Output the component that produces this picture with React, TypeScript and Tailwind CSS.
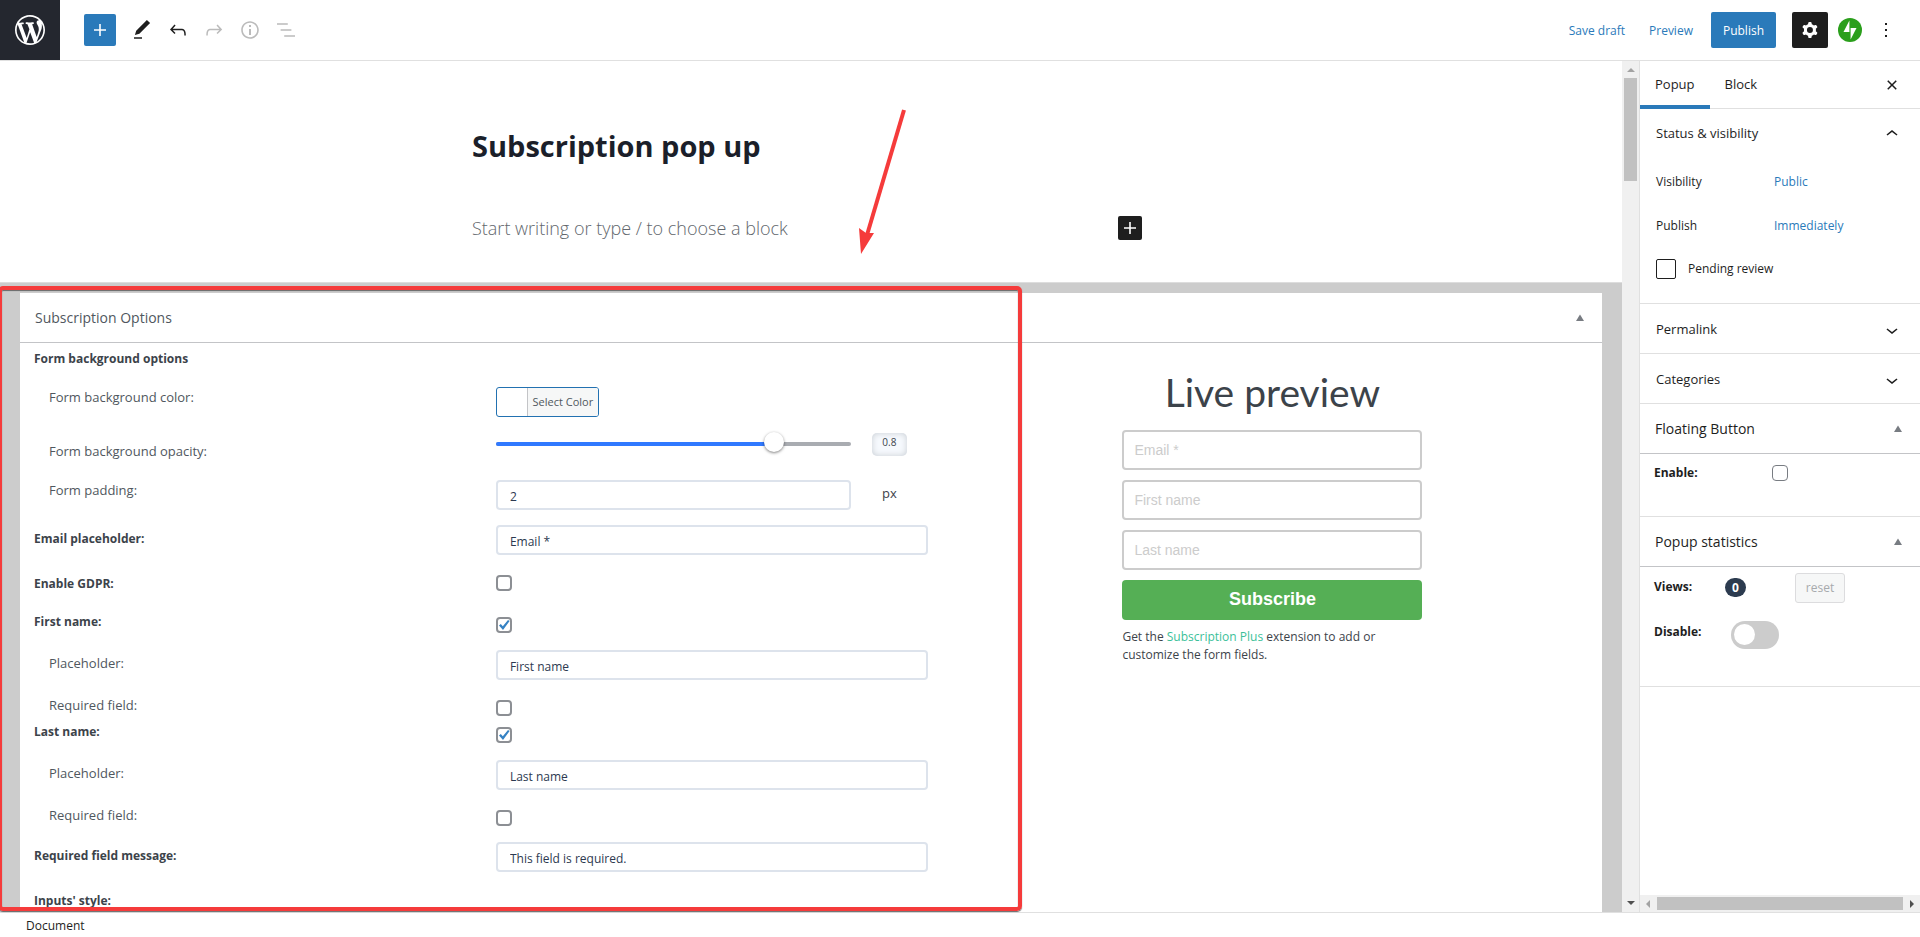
import React, { useState } from 'react';
import clsx from 'clsx';

const icons = {
  plus: 'M18 11.2h-5.2V6h-1.6v5.2H6v1.6h5.2V18h1.6v-5.2H18z',
  edit: 'M20.1 5.1L16.9 2 6.2 12.7l-1.3 4.4 4.5-1.3L20.1 5.1zM4 20.8h8v-1.5H4v1.5z',
  undo: 'M18.3 11.7c-.6-.6-1.4-.9-2.3-.9H6.7l2.9-3.3-1.1-1-4.5 5L8.5 16l1-1-2.7-2.7H16c.5 0 .9.2 1.3.5 1 1 1 3.4 1 4.5v.3h1.5v-.2c0-1.5 0-4.3-1.5-5.7z',
  redo: 'M15.6 6.5l-1.1 1 2.9 3.3H8c-.9 0-1.7.3-2.3.9-1.4 1.5-1.4 4.2-1.4 5.6v.2h1.5v-.3c0-1.1 0-3.5 1-4.5.3-.3.7-.5 1.3-.5h9.2L14.5 15l1.1 1.1 4.6-4.6-4.6-5z',
  info: 'M12 3.2c-4.8 0-8.8 3.9-8.8 8.8 0 4.8 3.9 8.8 8.8 8.8 4.8 0 8.8-3.9 8.8-8.8 0-4.8-4-8.8-8.8-8.8zm0 16c-4 0-7.2-3.3-7.2-7.2C4.8 8 8 4.8 12 4.8s7.2 3.3 7.2 7.2c0 4-3.2 7.2-7.2 7.2zM11 17h2v-6h-2v6zm0-8h2V7h-2v2z',
  list: 'M13.8 5.2H3v1.5h10.8V5.2zm-3.6 12v1.5H21v-1.5H10.2zm7.2-6H6.6v1.5h10.8v-1.5z',
  more: 'M13 19h-2v-2h2v2zm0-6h-2v-2h2v2zm0-6h-2V5h2v2z',
  close: 'M12 13.06l3.712 3.713 1.061-1.06L13.061 12l3.712-3.712-1.06-1.06L12 10.938 8.288 7.227l-1.061 1.06L10.939 12l-3.712 3.712 1.06 1.061L12 13.061z',
  up: 'M6.5 12.4L12 8l5.5 4.4-.9 1.2L12 10l-4.5 3.6-1-1.2z',
  down: 'M17.5 11.6L12 16l-5.5-4.4.9-1.2L12 14l4.5-3.6 1 1.2z',
  cog: 'M10.289 4.836A1 1 0 0111.275 4h1.306a1 1 0 01.987.836l.244 1.466c.787.26 1.503.679 2.108 1.218l1.393-.522a1 1 0 011.216.437l.653 1.13a1 1 0 01-.23 1.273l-1.148.944a6.025 6.025 0 010 2.435l1.149.946a1 1 0 01.23 1.272l-.653 1.13a1 1 0 01-1.216.437l-1.394-.522c-.605.54-1.32.958-2.108 1.218l-.244 1.466a1 1 0 01-.987.836h-1.306a1 1 0 01-.986-.836l-.244-1.466a5.995 5.995 0 01-2.108-1.218l-1.394.522a1 1 0 01-1.217-.436l-.653-1.131a1 1 0 01.23-1.272l1.149-.946a6.026 6.026 0 010-2.435l-1.148-.944a1 1 0 01-.23-1.272l.653-1.131a1 1 0 011.217-.437l1.393.522a5.994 5.994 0 012.108-1.218l.244-1.466zM14.929 12a3 3 0 11-6 0 3 3 0 016 0z',
};

function Icon({ name }: { name: keyof typeof icons }) {
  return (
    <svg viewBox="0 0 24 24" className="size-6 shrink-0 fill-current" aria-hidden="true">
      <path fillRule="evenodd" clipRule="evenodd" d={icons[name]} />
    </svg>
  );
}

function Triangle() {
  return (
    <svg viewBox="0 0 8 7" className="h-[7px] w-2 fill-[#787c82]" aria-hidden="true">
      <path d="M4 0.5L8 7H0z" />
    </svg>
  );
}

interface CheckboxProps {
  id: string;
  defaultChecked?: boolean;
  className?: string;
}

function Checkbox({ id, defaultChecked, className }: CheckboxProps) {
  return (
    <span className={clsx('grid size-4 shrink-0', className)}>
      <input
        id={id}
        type="checkbox"
        defaultChecked={defaultChecked}
        className="peer col-start-1 row-start-1 size-4 appearance-none rounded-[4px] border-2 border-[#8c8f94] bg-white"
      />
      <svg
        viewBox="0 0 16 16"
        className="pointer-events-none invisible col-start-1 row-start-1 size-4 fill-[#3582c4] peer-checked:visible"
        aria-hidden="true"
      >
        <path d="M3 8.4l1.8-1.4 2 2.2L12 3l1.6 1L7 13z" />
      </svg>
    </span>
  );
}

interface RowProps {
  label: string;
  htmlFor?: string;
  sub?: boolean;
  className?: string;
  labelClass?: string;
  children?: React.ReactNode;
}

function Row({ label, htmlFor, sub, className = 'mb-[15px]', labelClass, children }: RowProps) {
  return (
    <div className={clsx('grid grid-cols-2 items-start gap-x-[30px]', className)}>
      <label
        htmlFor={htmlFor}
        className={clsx(
          sub ? 'pl-[15px] text-[13px] leading-5 text-[#50575e]' : 'text-xs leading-[22px] font-bold',
          labelClass,
        )}
      >
        {label}
      </label>
      {children}
    </div>
  );
}

const inputClass =
  'h-[30px] w-full min-w-0 rounded-[4px] border-2 border-[#dde3ec] bg-white px-3 pt-0.5 text-xs text-[#2c3950]';

function TextRow({ id, label, value, sub }: { id: string; label: string; value: string; sub?: boolean }) {
  return (
    <Row label={label} htmlFor={id} sub={sub} labelClass="pt-[3px]">
      <input id={id} type="text" defaultValue={value} className={inputClass} />
    </Row>
  );
}

function SubscriptionForm() {
  const [opacity, setOpacity] = useState(0.8);
  const percent = 5 + opacity * 92;

  return (
    <div className="w-7/12 pt-[5px] pr-[15px] pl-3.5">
      <Row label="Form background options" className="mb-[15px] h-6" />
      <Row label="Form background color:" htmlFor="bg-color" sub>
        <button
          id="bg-color"
          type="button"
          className="flex h-[30px] w-[103px] overflow-hidden rounded-[3px] border border-[#2271b1] bg-white text-[11px]"
        >
          <span className="w-[30px]" />
          <span className="h-full flex-1 border-l border-[#c3c4c7] bg-[#f6f7f7] text-center leading-7 whitespace-nowrap text-[#50575e]">
            Select Color
          </span>
        </button>
      </Row>
      <Row label="Form background opacity:" htmlFor="bg-opacity" sub className="mb-[15px] h-[33px]" labelClass="pt-[9px]">
        <div className="flex items-center gap-[21px] pr-[21px]">
          <div className="grid h-6 flex-1 items-center">
            <div className="col-start-1 row-start-1 h-1 overflow-hidden rounded-full bg-[#a9acb1]">
              <div className="h-full bg-[#3079ff]" style={{ width: `${percent}%` }} />
            </div>
            <input
              id="bg-opacity"
              type="range"
              min={0}
              max={1}
              step={0.1}
              value={opacity}
              onChange={(e) => setOpacity(Number(e.target.value))}
              className="col-start-1 row-start-1 h-5 w-full -translate-y-0.5 appearance-none bg-transparent [&::-webkit-slider-thumb]:size-5 [&::-webkit-slider-thumb]:appearance-none [&::-webkit-slider-thumb]:rounded-full [&::-webkit-slider-thumb]:bg-white [&::-webkit-slider-thumb]:shadow-[0_1px_3px_rgba(0,0,0,0.5)]"
            />
          </div>
          <output className="h-[23px] w-[35px] rounded-[5px] bg-[#f6f9fd] text-center text-[10px] leading-[18px] shadow-[inset_0_0_6px_#c8cdd3]">
            {opacity}
          </output>
        </div>
      </Row>
      <Row label="Form padding:" htmlFor="padding" sub>
        <div className="flex gap-[21px] pr-[21px]">
          <input id="padding" type="text" defaultValue="2" className={inputClass} />
          <span className="w-[35px] shrink-0 text-center text-[13px] leading-[26px]">px</span>
        </div>
      </Row>
      <TextRow id="email-placeholder" label="Email placeholder:" value="Email *" />
      <Row label="Enable GDPR:" htmlFor="gdpr" className="mb-[15px] h-[26px]" labelClass="pt-[3px]">
        <Checkbox id="gdpr" className="mt-[5px]" />
      </Row>
      <Row label="First name:" htmlFor="first-name" className="mb-[15px] h-6">
        <Checkbox id="first-name" defaultChecked className="mt-1.5" />
      </Row>
      <TextRow id="first-placeholder" label="Placeholder:" value="First name" sub />
      <Row label="Required field:" htmlFor="first-required" sub className="h-[26px]">
        <Checkbox id="first-required" className="mt-[5px]" />
      </Row>
      <Row label="Last name:" htmlFor="last-name" className="mb-[15px] h-6">
        <Checkbox id="last-name" defaultChecked className="mt-1.5" />
      </Row>
      <TextRow id="last-placeholder" label="Placeholder:" value="Last name" sub />
      <Row label="Required field:" htmlFor="last-required" sub className="mb-[15px] h-[22px]">
        <Checkbox id="last-required" className="mt-[5px]" />
      </Row>
      <TextRow id="required-message" label="Required field message:" value="This field is required." />
      <Row label="Inputs' style:" labelClass="pt-[3px]" />
    </div>
  );
}

function LivePreview() {
  return (
    <div className="w-5/12 pt-[25px]">
      <div className="mx-auto w-[300px]">
        <h2 className="mb-3.5 text-center font-[Lato] text-[39px] leading-12">Live preview</h2>
        <form className="flex flex-col gap-2.5 font-['Liberation_Sans',sans-serif]">
          {['Email *', 'First name', 'Last name'].map((text) => (
            <input
              key={text}
              type="text"
              placeholder={text}
              aria-label={text}
              className="h-10 rounded-[4px] border-2 border-[#cccccc] px-2.5 text-sm placeholder:text-[#cccccc]"
            />
          ))}
          <button type="button" className="h-10 rounded-[4px] bg-[#55af55] pb-0.5 text-lg font-bold text-white">
            Subscribe
          </button>
        </form>
        <p className="mt-2 text-xs leading-[18px]">
          Get the{' '}
          <a href="#subscription-plus" className="text-[#3bbf99]">
            Subscription Plus
          </a>{' '}
          extension to add or customize the form fields.
        </p>
      </div>
    </div>
  );
}

function Header() {
  return (
    <header className="flex h-[61px] shrink-0 items-center border-b border-[#e0e0e0] text-[#1e1e1e]">
      <a href="#dashboard" aria-label="View posts" className="flex size-[60px] items-center justify-center bg-[#24272f] text-white">
        <svg viewBox="-2 -2 24 24" className="size-9 fill-current" aria-hidden="true">
          <path d="M20 10c0-5.51-4.49-10-10-10C4.48 0 0 4.49 0 10c0 5.52 4.48 10 10 10 5.51 0 10-4.48 10-10zM7.78 15.37L4.37 6.22c.55-.02 1.17-.08 1.17-.08.5-.06.44-1.13-.06-1.11 0 0-1.45.11-2.37.11-.18 0-.37 0-.58-.01C4.12 2.69 6.87 1.11 10 1.11c2.33 0 4.45.87 6.05 2.34-.68-.11-1.65.39-1.65 1.58 0 .74.45 1.36.9 2.1.35.61.55 1.36.55 2.46 0 1.49-1.4 5-1.4 5l-3.03-8.37c.54-.02.82-.17.82-.17.5-.05.44-1.25-.06-1.22 0 0-1.44.12-2.38.12-.87 0-2.33-.12-2.33-.12-.5-.03-.56 1.2-.06 1.22l.92.08 1.26 3.41zM17.41 10c.24-.64.74-1.87.43-4.25.7 1.29 1.05 2.71 1.05 4.25 0 3.29-1.73 6.24-4.4 7.78.97-2.59 1.94-5.2 2.92-7.78zM6.1 18.09C3.12 16.65 1.11 13.53 1.11 10c0-1.3.23-2.48.72-3.59C3.25 10.3 4.67 14.2 6.1 18.09zm4.03-6.63l2.58 6.98c-.86.29-1.76.45-2.71.45-.79 0-1.57-.11-2.29-.33.81-2.38 1.62-4.74 2.42-7.1z" />
        </svg>
      </a>
      <div className="ml-6 flex items-center gap-3">
        <button type="button" aria-label="Add block" className="mr-0.5 flex size-8 items-center justify-center rounded-xs bg-[#2a7aba] text-white">
          <Icon name="plus" />
        </button>
        <button type="button" aria-label="Tools"><Icon name="edit" /></button>
        <button type="button" aria-label="Undo"><Icon name="undo" /></button>
        <button type="button" aria-label="Redo" disabled className="text-[#bbbbbb]"><Icon name="redo" /></button>
        <button type="button" aria-label="Details" disabled className="text-[#bbbbbb]"><Icon name="info" /></button>
        <button type="button" aria-label="List view" disabled className="text-[#bbbbbb]"><Icon name="list" /></button>
      </div>
      <div className="ml-auto flex items-center pr-[22px] text-xs text-[#2a7aba]">
        <button type="button" className="mr-6 pt-0.5">Save draft</button>
        <button type="button" className="mr-[18px] pt-0.5">Preview</button>
        <button type="button" className="mr-4 h-9 rounded-xs bg-[#2a7aba] px-3 pt-0.5 text-white">Publish</button>
        <button type="button" aria-label="Settings" className="mr-2.5 flex size-9 items-center justify-center rounded-xs bg-[#1e1e1e] text-white">
          <Icon name="cog" />
        </button>
        <button type="button" aria-label="Jetpack" className="mr-3">
          <svg viewBox="0 0 24 24" className="size-6" aria-hidden="true">
            <circle cx="12" cy="12" r="12" fill="#2b9f1c" />
            <path fill="#fff" d="M11.4 2.4V14H5.5zM12.6 21.6V10h5.9z" />
          </svg>
        </button>
        <button type="button" aria-label="Options" className="text-[#1e1e1e]"><Icon name="more" /></button>
      </div>
    </header>
  );
}

const metaboxTitle =
  'flex h-[50px] w-full items-center justify-between border-b border-[#c3c4c7] pr-[18px] pl-[15px] text-sm';

function Sidebar() {
  return (
    <aside className="flex w-[281px] shrink-0 flex-col border-l border-[#e0e0e0] text-xs text-[#1e1e1e]">
      <div className="flex h-12 shrink-0 items-center border-b border-[#e0e0e0] pr-4 text-[13px]">
        <button type="button" className="h-12 self-start border-b-4 border-[#2a7aba] px-[15px] pt-1">Popup</button>
        <button type="button" className="h-12 px-[15px]">Block</button>
        <button type="button" aria-label="Close settings" className="ml-auto"><Icon name="close" /></button>
      </div>

      <div className="min-h-0 flex-1 overflow-hidden">
        <section className="h-[195px] border-b border-[#e0e0e0] px-4">
          <button type="button" className="flex h-[50px] w-full items-center justify-between text-[13px]">
            Status &amp; visibility <Icon name="up" />
          </button>
          <dl className="grid grid-cols-[118px_1fr] pt-px leading-11">
            <dt>Visibility</dt>
            <dd><button type="button" className="text-[#2a7aba]">Public</button></dd>
            <dt>Publish</dt>
            <dd><button type="button" className="text-[#2a7aba]">Immediately</button></dd>
          </dl>
          <label className="mt-[11px] flex items-center gap-3">
            <input type="checkbox" className="size-5 appearance-none rounded-xs border border-[#1e1e1e]" />
            Pending review
          </label>
        </section>
        {['Permalink', 'Categories'].map((title) => (
          <button key={title} type="button" className="flex h-[50px] w-full items-center justify-between border-b border-[#e0e0e0] pt-0.5 pr-4 pl-4 text-[13px]">
            {title} <Icon name="down" />
          </button>
        ))}

        <section className="h-[113px] border-b border-[#e0e0e0]">
          <button type="button" className={metaboxTitle}>
            Floating Button <Triangle />
          </button>
          <div className="grid grid-cols-[118px_1fr] items-center px-3.5 pt-[9px]">
            <label htmlFor="floating" className="font-bold leading-5">Enable:</label>
            <input id="floating" type="checkbox" className="size-4 appearance-none rounded-[4px] border border-[#787c82]" />
          </div>
        </section>

        <section className="h-[170px] border-b border-[#e0e0e0]">
          <button type="button" className={metaboxTitle}>
            Popup statistics <Triangle />
          </button>
          <div className="flex items-start px-3.5 pt-1.5">
            <span className="mt-1 w-[71px] font-bold leading-5">Views:</span>
            <span className="mt-[5px] h-[19px] w-[21px] rounded-full bg-[#2c3b4f] text-center font-bold leading-[19px] text-white">0</span>
            <button type="button" disabled className="ml-[49px] h-[30px] w-[50px] rounded-[3px] border border-[#dcdcde] bg-[#f6f7f7] text-[#a7aaad]">
              reset
            </button>
          </div>
          <label className="mt-[18px] flex items-start px-3.5">
            <span className="w-[77px] font-bold leading-[22px]">Disable:</span>
            <input
              type="checkbox"
              className="h-7 w-12 appearance-none rounded-full bg-[#cccccc] p-[3px] before:block before:size-[21px] before:rounded-full before:bg-white checked:before:translate-x-5"
            />
          </label>
        </section>
      </div>

      <div className="flex h-[17px] shrink-0 items-center justify-between bg-[#f0f0f0] px-1.5" aria-hidden="true">
        <svg viewBox="0 0 4 8" className="h-2 w-1 fill-[#a3a3a3]"><path d="M4 0v8L0 4z" /></svg>
        <div className="mx-[7px] h-[13px] flex-1 bg-[#c1c1c1]" />
        <svg viewBox="0 0 4 8" className="h-2 w-1 fill-[#505050]"><path d="M0 0v8l4-4z" /></svg>
      </div>
    </aside>
  );
}

export default function App() {
  return (
    <div className="flex h-screen flex-col overflow-hidden bg-white font-['Open_Sans','Noto_Sans',sans-serif] text-[#3c434a]">
      <Header />

      <div className="relative flex min-h-0 flex-1">
        <main className="flex min-w-0 flex-1 flex-col overflow-hidden">
          <div className="h-[221px] shrink-0">
            <div className="mx-auto max-w-[680px] pt-[61px] pr-[9px] pl-px">
              <h1 className="mb-[46px] text-[29px] font-bold leading-12 text-[#1b1f2a]">Subscription pop up</h1>
              <div className="flex items-center justify-between">
                <p className="text-lg font-light leading-6 text-[#62676d]">
                  Start writing or type / to choose a block
                </p>
                <button type="button" aria-label="Add block" className="rounded-xs bg-[#1e1e1e] text-white">
                  <Icon name="plus" />
                </button>
              </div>
            </div>
          </div>

          <div className="min-h-0 flex-1 border-t border-[#dddddd] bg-[#cccccc] px-5 pt-2.5">
            <section className="h-full bg-white">
              <div className="flex h-[50px] items-center justify-between border-b border-[#c3c4c7] pr-[18px] pl-[15px]">
                <h2 className="text-sm text-[#50575e]">Subscription Options</h2>
                <button type="button" aria-label="Toggle panel"><Triangle /></button>
              </div>
              <div className="flex">
                <SubscriptionForm />
                <LivePreview />
              </div>
            </section>
          </div>
        </main>

        <div className="flex w-[17px] shrink-0 flex-col items-center bg-[#f0f0f0] py-[7px]" aria-hidden="true">
          <svg viewBox="0 0 8 4" className="h-1 w-2 fill-[#a3a3a3]"><path d="M0 4h8L4 0z" /></svg>
          <div className="mt-1.5 h-[103px] w-[13px] bg-[#c1c1c1]" />
          <svg viewBox="0 0 8 4" className="mt-auto h-1 w-2 fill-[#505050]"><path d="M0 0h8L4 4z" /></svg>
        </div>

        <Sidebar />

        {/* Annotation: highlighted options box and arrow */}
        <div className="pointer-events-none absolute top-[225px] bottom-px -left-0.5 w-[1024px] rounded-[5px] border-4 border-[#f53b3b] shadow-[0_1px_1px_#666,inset_0_1px_1px_#666]" />
        <svg viewBox="0 0 50 150" className="pointer-events-none absolute top-12 left-[857px] h-[150px] w-[50px]" aria-hidden="true">
          <path d="M47 1L10 126" stroke="#f53b3b" strokeWidth="4" />
          <path d="M4 145L2 119L9 124L17 124z" fill="#f53b3b" />
        </svg>
      </div>

      <footer className="flex h-[25px] shrink-0 items-center border-t border-[#e0e0e0] pt-0.5 pl-[26px] text-xs text-[#1e1e1e]">
        Document
      </footer>
    </div>
  );
}
